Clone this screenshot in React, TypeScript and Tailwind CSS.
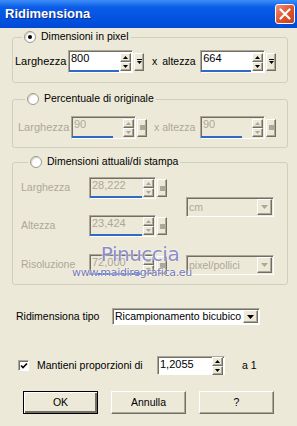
import type { ReactNode } from "react";

const raised =
  "border border-t-white border-l-white border-r-[#716f64] border-b-[#716f64] shadow-[inset_-1px_-1px_0_#aca899] bg-[#ece9d8]";
const sunken =
  "border border-t-[#aca899] border-l-[#aca899] border-r-white border-b-white shadow-[inset_1px_1px_0_#716f64]";

const Arrow = ({ up, disabled }: { up?: boolean; disabled?: boolean }) => (
  <svg width="5" height="3" viewBox="0 0 5 3">
    <path d={up ? "M2.5 0L5 3H0Z" : "M0 0H5L2.5 3Z"} fill={disabled ? "#aca899" : "#000"} />
  </svg>
);

const UpDown = ({ disabled }: { disabled?: boolean }) => (
  <div className="flex flex-col">
    <div className={`flex h-[9px] w-[11px] items-center justify-center ${raised}`}>
      <Arrow up disabled={disabled} />
    </div>
    <div className={`flex h-[9px] w-[11px] items-center justify-center ${raised}`}>
      <Arrow disabled={disabled} />
    </div>
  </div>
);

const Extra = ({ disabled }: { disabled?: boolean }) => (
  <div className={`flex h-[18px] w-[10px] flex-col items-center justify-center gap-[1px] ${raised}`}>
    {disabled ? (
      <div className="h-[5px] w-[5px] bg-[#aca899]" />
    ) : (
      <>
        <div className="h-[1px] w-[5px] bg-black" />
        <Arrow />
      </>
    )}
  </div>
);

type SpinProps = {
  value: string;
  textW: string;
  disabled?: boolean;
  bar?: number;
  extra?: boolean;
  h?: string;
};

const SpinField = ({ value, textW, disabled, bar = 1, extra = true, h = "h-[23px]" }: SpinProps) => (
  <div className="flex items-center gap-[1px]">
    <div className={`flex ${h} ${sunken} ${disabled ? "bg-[#ece9d8] text-[#aca899]" : "bg-white text-black"}`}>
      <div className={`flex flex-col justify-between ${textW}`}>
        <span className="pl-[2px] pt-[1px] text-[11px] leading-[13px]">{value}</span>
        {extra && <div className="h-[2px] bg-[#316ac5]" style={{ width: `${bar * 100}%` }} />}
      </div>
      <div className="flex items-center px-[1px]">
        <UpDown disabled={disabled} />
      </div>
    </div>
    {extra && <Extra disabled={disabled} />}
  </div>
);

const DropDown = ({ value, w, disabled, h = "h-[20px]" }: { value: string; w: string; disabled?: boolean; h?: string }) => (
  <div className={`flex ${w} ${h} items-center ${sunken} ${disabled ? "bg-[#ece9d8] text-[#aca899]" : "bg-white text-black"}`}>
    <span className="flex-1 whitespace-nowrap pl-[2px] leading-[13px]">{value}</span>
    <div className={`mr-[1px] flex h-[calc(100%-2px)] w-[15px] items-center justify-center ${raised}`}>
      <svg width="7" height="4" viewBox="0 0 7 4">
        <path d="M0 0H7L3.5 4Z" fill={disabled ? "#aca899" : "#000"} />
      </svg>
    </div>
  </div>
);

const Radio = ({ checked }: { checked?: boolean }) => (
  <div className="flex h-[12px] w-[12px] items-center justify-center rounded-full border border-[#9c9a8f] bg-white shadow-[inset_1px_1px_1px_#d6d3c4]">
    {checked && <div className="h-[4px] w-[4px] rounded-full bg-black" />}
  </div>
);

const Group = ({ label, checked, children, cls }: { label: string; checked?: boolean; children: ReactNode; cls: string }) => (
  <fieldset className={`rounded-[3px] border border-[#d0d0bf] ${cls}`}>
    <legend className="ml-[7px] flex h-[14px] items-center gap-[5px] px-[2px]">
      <Radio checked={checked} />
      <span className="whitespace-nowrap">{label}</span>
    </legend>
    {children}
  </fieldset>
);

const Button = ({ children, def }: { children: ReactNode; def?: boolean }) => (
  <button
    className={`flex h-[23px] w-[75px] items-center justify-center ${
      def ? "border border-black shadow-[inset_1px_1px_0_white,inset_-2px_-2px_0_#716f64]" : raised
    } bg-[#ece9d8]`}
  >
    {children}
  </button>
);

export default function App() {
  return (
    <div className="relative h-[426px] w-[297px] overflow-hidden bg-[#ece9d8] font-['Liberation_Sans',Arial,sans-serif] text-[10.5px] text-black">
      {/* title bar */}
      <div className="flex h-[28px] items-center justify-between bg-linear-to-b from-[#3d8ef7] via-[#0a5de8] via-25% to-[#0049d9] pl-[5px] pr-[2px]">
        <span className="text-[13px] font-bold text-white [text-shadow:1px_1px_0_#0a2a8a]">Ridimensiona</span>
        <div className="flex h-[20px] w-[20px] items-center justify-center rounded-[3px] border border-white bg-linear-to-br from-[#f0937a] via-[#e0542c] to-[#c5411c]">
          <svg width="12" height="12" viewBox="0 0 12 12">
            <path d="M1.5 1.5L10.5 10.5M10.5 1.5L1.5 10.5" stroke="white" strokeWidth="2.2" strokeLinecap="round" />
          </svg>
        </div>
      </div>

      <div className="flex flex-col pl-[12px] pr-[9px]">
        {/* Dimensioni in pixel */}
        <Group label="Dimensioni in pixel" checked cls="mt-[2px] pb-[9px] pl-[2px] pt-[6px]">
          <div className="flex items-center">
            <span className="w-[53px] text-[11px]">Larghezza</span>
            <SpinField value="800" textW="w-[50px]" />
            <span className="ml-[8px]">x</span>
            <span className="ml-[5px] w-[38px]">altezza</span>
            <SpinField value="664" textW="w-[50px]" />
          </div>
        </Group>

        {/* Percentuale di originale */}
        <Group label="Percentuale di originale" cls="mt-[9px] pb-[8px] pl-[5px] pt-[10px]">
          <div className="flex items-center text-[#aca899]">
            <span className="w-[53px] text-[11px]">Larghezza</span>
            <SpinField value="90" textW="w-[50px]" disabled bar={0.82} />
            <span className="ml-[7px] w-[46px] whitespace-nowrap">x altezza</span>
            <SpinField value="90" textW="w-[50px]" disabled bar={0.82} />
          </div>
        </Group>

        {/* Dimensioni attuali/di stampa */}
        <Group label="Dimensioni attuali/di stampa" cls="mt-[7px] pb-[8px] pl-[8px] pt-[8px]">
          <div className="flex items-center text-[#aca899]">
            <div className="flex flex-col gap-[16px]">
              <div className="flex items-center">
                <span className="w-[68px]">Larghezza</span>
                <SpinField value="28,222" textW="w-[52px]" disabled h="h-[22px]" />
              </div>
              <div className="flex items-center">
                <span className="w-[68px]">Altezza</span>
                <SpinField value="23,424" textW="w-[52px]" disabled h="h-[22px]" />
              </div>
            </div>
            <div className="ml-[19px]">
              <DropDown value="cm" w="w-[88px]" disabled />
            </div>
          </div>
          <div className="mt-[17px] flex items-center text-[#aca899]">
            <span className="w-[68px]">Risoluzione</span>
            <SpinField value="72,000" textW="w-[52px]" disabled h="h-[22px]" />
            <div className="ml-[19px]">
              <DropDown value="pixel/pollici" w="w-[88px]" disabled />
            </div>
          </div>
        </Group>

        {/* Ridimensiona tipo */}
        <div className="mt-[23px] flex items-center pl-[4px]">
          <span className="w-[96px] whitespace-nowrap">Ridimensiona tipo</span>
          <DropDown value="Ricampionamento bicubico" w="w-[148px]" h="h-[17px]" />
        </div>

        {/* Mantieni proporzioni */}
        <div className="mt-[31px] flex items-center pl-[6px]">
          <div className={`flex h-[11px] w-[11px] items-center justify-center bg-white ${sunken}`}>
            <svg width="8" height="8" viewBox="0 0 8 8">
              <path d="M1 3.5L3 5.5L7 1.5" stroke="black" strokeWidth="1.6" fill="none" />
            </svg>
          </div>
          <span className="ml-[8px] w-[120px] whitespace-nowrap">Mantieni proporzioni di</span>
          <SpinField value="1,2055" textW="w-[53px]" extra={false} h="h-[19px]" />
          <span className="ml-[17px]">a 1</span>
        </div>

        {/* buttons */}
        <div className="mt-[16px] flex gap-[13px] pl-[11px]">
          <Button def>OK</Button>
          <Button>Annulla</Button>
          <Button>?</Button>
        </div>
      </div>

      {/* watermark */}
      <div className="pointer-events-none absolute left-[72px] top-[244px] flex flex-col items-center leading-none text-[#8c8cc6] [text-shadow:0_0_2px_white,0_0_1px_white]">
        <span className="ml-[16px] font-['DejaVu_Sans',sans-serif] text-[20px] tracking-[-0.5px]">Pinuccia</span>
        <span className="mt-[3px] font-['DejaVu_Sans',sans-serif] text-[11px] tracking-[-0.3px] text-[#7676b4]">www.maidiregrafica.eu</span>
      </div>
    </div>
  );
}
